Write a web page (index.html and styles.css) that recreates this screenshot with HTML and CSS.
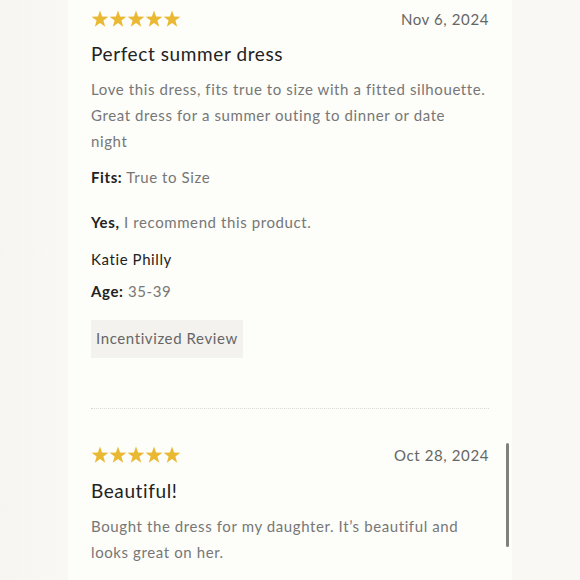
FILE: index.html
```html
<!DOCTYPE html>
<html>
<head>
<meta charset="utf-8">
<link rel="stylesheet" href="styles.css">
</head>
<body>
<div class="panel">
  <article class="review">
    <div class="review-head">
      <div class="stars">
        <svg viewBox="0 0 90 18" width="90" height="18"><g fill="#e9b934"><polygon id="s" points="9,0.6 11.1,6.6 17.4,6.7 12.4,10.5 14.2,16.8 9,13.1 3.8,16.8 5.6,10.5 0.6,6.7 6.9,6.6"/><use href="#s" x="18"/><use href="#s" x="36"/><use href="#s" x="54"/><use href="#s" x="72"/></g></svg>
      </div>
      <span class="date">Nov 6, 2024</span>
    </div>
    <h2 class="title">Perfect summer dress</h2>
    <p class="body">Love this dress, fits true to size with a fitted silhouette. Great dress for a summer outing to dinner or date<br>night</p>
    <p class="meta fits"><b>Fits:</b> True to Size</p>
    <p class="meta rec"><b>Yes,</b> I recommend this product.</p>
    <p class="author">Katie Philly</p>
    <p class="meta age"><b>Age:</b> 35-39</p>
    <span class="badge">Incentivized Review</span>
  </article>
  <hr class="divider">
  <article class="review second">
    <div class="review-head">
      <div class="stars">
        <svg viewBox="0 0 90 18" width="90" height="18"><g fill="#e9b934"><polygon id="s2" points="9,0.6 11.1,6.6 17.4,6.7 12.4,10.5 14.2,16.8 9,13.1 3.8,16.8 5.6,10.5 0.6,6.7 6.9,6.6"/><use href="#s2" x="18"/><use href="#s2" x="36"/><use href="#s2" x="54"/><use href="#s2" x="72"/></g></svg>
      </div>
      <span class="date">Oct 28, 2024</span>
    </div>
    <h2 class="title">Beautiful!</h2>
    <p class="body">Bought the dress for my daughter. It’s beautiful and looks great on her.</p>
  </article>
  <div class="scrollbar"></div>
</div>
</body>
</html>
```

FILE: styles.css
```css
html, body {
  margin: 0;
  padding: 0;
  height: 580px;
  overflow: hidden;
}
body {
  background: linear-gradient(to right, #f6f5f1 0, #f9f8f4 60px, #f9f8f4 100%);
  font-family: "Lato", "Noto Sans", sans-serif;
}
.panel {
  position: relative;
  margin-left: 68px;
  width: 398px;
  height: 580px;
  padding: 0 23px;
  background: #fdfdf9;
  overflow: hidden;
}
.review {
  padding-top: 10px;
}
.review-head {
  display: flex;
  justify-content: space-between;
  align-items: flex-start;
  height: 18px;
}
.stars svg {
  display: block;
}
.date {
  font-size: 15px;
  letter-spacing: 0.6px;
  color: #666;
  line-height: 18px;
}
.title {
  margin: 15px 0 0;
  font-size: 19px;
  font-weight: 400;
  letter-spacing: 0.6px;
  color: #222;
  line-height: 22px;
}
.body {
  margin: 11px 0 0;
  font-size: 15px;
  line-height: 26px;
  letter-spacing: 0.6px;
  color: #777;
}
.meta {
  margin: 0;
  font-size: 15px;
  line-height: 20px;
  letter-spacing: 0.6px;
  color: #777;
}
.meta b {
  font-weight: 700;
  color: #222;
}
.fits { margin-top: 13px; }
.rec { margin-top: 25px; }
.author {
  margin: 17px 0 0;
  font-size: 15px;
  line-height: 20px;
  letter-spacing: 0.6px;
  color: #222;
}
.age { margin-top: 12px; }
.badge {
  display: inline-block;
  margin-top: 19px;
  padding: 8px 5px 10px;
  background: #f3f2ef;
  font-size: 15px;
  line-height: 20px;
  letter-spacing: 0.6px;
  color: #666;
}
.divider {
  margin: 50px 0 0;
  border: 0;
  border-top: 1px dotted #d9d9d4;
  height: 0;
}
.review.second {
  padding-top: 37px;
}
.second .title {
  margin-top: 16px;
}
.scrollbar {
  position: absolute;
  left: 438px;
  top: 443px;
  width: 3px;
  height: 104px;
  border-radius: 2px;
  background: #80817d;
}
```
